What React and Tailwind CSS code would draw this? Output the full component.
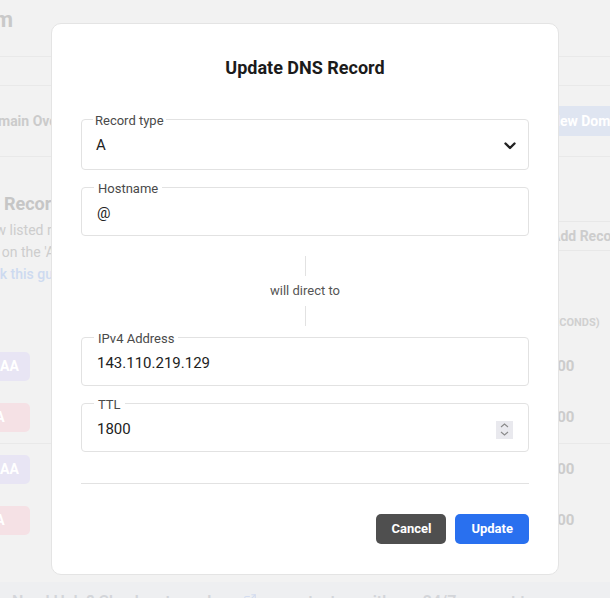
import React from 'react';
import { ExternalLink } from 'lucide-react';

const Field = ({ label, legendClass, children }) => (
  <fieldset className="border border-[#e2e2e2] rounded-[4px]">
    <legend className={`${legendClass} pt-[4px] text-[13px] leading-[16px] text-[#4a4a4a]`}>{label}</legend>
    {children}
  </fieldset>
);

const Badge = ({ type }) => (
  <div
    className={`ml-[2px] w-[60px] h-[29px] shrink-0 rounded-[5px] flex items-center justify-center text-white text-[14px] font-bold ${
      type === 'A' ? 'bg-[#f5e1e5]' : 'bg-[#e8e5f4]'
    }`}
  >
    {type}
  </div>
);

const RecordRow = ({ type }) => (
  <div className="h-[51px] flex items-center">
    <Badge type={type} />
    <div className="w-[510px] shrink-0" />
    <div className="text-[15px] font-bold text-[#cccccc]">1800</div>
  </div>
);

export default function App() {
  return (
    <div className="relative h-[598px] w-full overflow-hidden bg-[#f2f2f2] font-[Roboto,sans-serif]">
      {/* page behind the dialog */}
      <div className="-ml-[32px]">
        <div className="h-[57px] border-b border-[#e9e9e9] pt-[7px]">
          <div className="w-[45px] flex justify-end whitespace-nowrap text-[22px] leading-[26px] font-bold text-[#c9c9c9]">
            example.com
          </div>
        </div>
        <div className="h-[29px] border-b border-[#e9e9e9]" />
        <div className="h-[71px] border-b border-[#e9e9e9] flex items-center">
          <div className="w-[570px] shrink-0 pl-[13px] text-[14px] font-bold text-[#cbcbcb] whitespace-nowrap">
            Domain Overview
          </div>
          <div className="h-[30px] shrink-0 px-[12px] rounded-[5px] bg-[#dfe5f1] text-white text-[14px] font-bold flex items-center whitespace-nowrap">
            New Domain
          </div>
        </div>

        <div className="flex pt-[35px]">
          <div className="w-[570px] shrink-0 whitespace-nowrap">
            <div className="-ml-[4px] text-[18px] leading-[24px] font-bold text-[#c6c6c6]">DNS Records</div>
            <div className="mt-[3px] text-[14px] leading-[22px] text-[#cdcdcd]">
              <div>Below listed records are DNS records of this domain.</div>
              <div>Click on the 'Add Record' button to add a new record.</div>
              <div className="font-medium text-[#cddaf0]">Check this guide</div>
            </div>
          </div>
          <div className="mt-[29px] h-[30px] shrink-0 px-[12px] rounded-[5px] border border-[#e8e8e8] text-[14px] font-bold text-[#cdcdcd] flex items-center whitespace-nowrap">
            Add Record
          </div>
        </div>

        <div className="mt-[28px] h-[20px] flex items-center">
          <div className="w-[552px] shrink-0" />
          <div className="text-[11px] font-bold text-[#d0d0d0] uppercase whitespace-nowrap">TTL (seconds)</div>
        </div>
        <div className="mt-[8px]">
          <div className="border-b border-[#e9e9e9]">
            <RecordRow type="AAAA" />
            <RecordRow type="A" />
          </div>
          <div>
            <RecordRow type="AAAA" />
            <RecordRow type="A" />
          </div>
        </div>
      </div>
      <div className="mt-[36px] h-[40px] bg-[#eeeff1] pt-[10px] pl-[12px] flex items-start gap-[6px] text-[16px] leading-[20px] font-semibold text-[#d3d5d9] whitespace-nowrap">
        <span>Need Help? Check out our docs</span>
        <ExternalLink size={14} className="mt-[1px] text-[#d3dcef]" />
        <span>or contact us with our 24/7 support team</span>
      </div>

      {/* dialog */}
      <div className="absolute inset-0 flex justify-center items-start pt-[23px]">
        <div className="w-[508px] bg-white rounded-[10px] border border-[#e4e4e4] px-[29px] pt-[32px] pb-[30px]">
          <h2 className="text-center text-[18px] leading-[24px] font-bold text-[#1b1b1b]">Update DNS Record</h2>

          <div className="mt-[29px]">
            <Field label="Record type" legendClass="ml-[11px] px-[2px]">
              <div className="h-[33px] pl-[14px] pr-[12px] flex items-center justify-between text-[15px] text-[#222]">
                <span>A</span>
                <svg width="12" height="8" viewBox="0 0 12 8" fill="none">
                  <path d="M1.5 1.5L6 6L10.5 1.5" stroke="#222" strokeWidth="2.4" strokeLinecap="round" strokeLinejoin="round" />
                </svg>
              </div>
              <div className="h-[7px]" />
            </Field>
          </div>

          <div className="mt-[7px]">
            <Field label="Hostname" legendClass="ml-[12px] px-[4px]">
              <div className="h-[33px] pl-[15px] pr-[15px] flex items-center text-[15px] text-[#222]">@</div>
              <div className="h-[5px]" />
            </Field>
          </div>

          <div className="mt-[20px] flex flex-col items-center">
            <div className="w-px h-[20px] bg-[#e2e2e2]" />
            <div className="h-[30px] flex items-center text-[13px] text-[#555]">will direct to</div>
            <div className="w-px h-[20px] bg-[#e2e2e2]" />
          </div>

          <div className="mt-[1px]">
            <Field label="IPv4 Address" legendClass="ml-[12px] px-[4px]">
              <div className="h-[33px] pl-[15px] pr-[15px] flex items-center text-[15px] text-[#222]">143.110.219.129</div>
              <div className="h-[5px]" />
            </Field>
          </div>

          <div className="mt-[7px]">
            <Field label="TTL" legendClass="ml-[12px] px-[4px]">
              <div className="h-[33px] pl-[15px] pr-[15px] flex items-center justify-between text-[15px] text-[#222]">
                <span>1800</span>
                <div className="w-[17px] h-[18px] bg-[#e9e9ee] flex flex-col items-center justify-center gap-[3px]">
                  <svg width="9" height="5" viewBox="0 0 9 5" fill="none">
                    <path d="M1 4L4.5 1L8 4" stroke="#8a8a8a" strokeWidth="1.1" />
                  </svg>
                  <svg width="9" height="5" viewBox="0 0 9 5" fill="none">
                    <path d="M1 1L4.5 4L8 1" stroke="#8a8a8a" strokeWidth="1.1" />
                  </svg>
                </div>
              </div>
              <div className="h-[5px]" />
            </Field>
          </div>

          <div className="mt-[31px] h-px bg-[#e2e2e2]" />

          <div className="mt-[30px] flex justify-end gap-[9px]">
            <button className="h-[30px] px-[15px] rounded-[5px] bg-[#4f4f4f] text-white text-[13px] font-bold">Cancel</button>
            <button className="h-[30px] px-[16px] rounded-[5px] bg-[#2970ef] text-white text-[13px] font-bold">Update</button>
          </div>
        </div>
      </div>
    </div>
  );
}
